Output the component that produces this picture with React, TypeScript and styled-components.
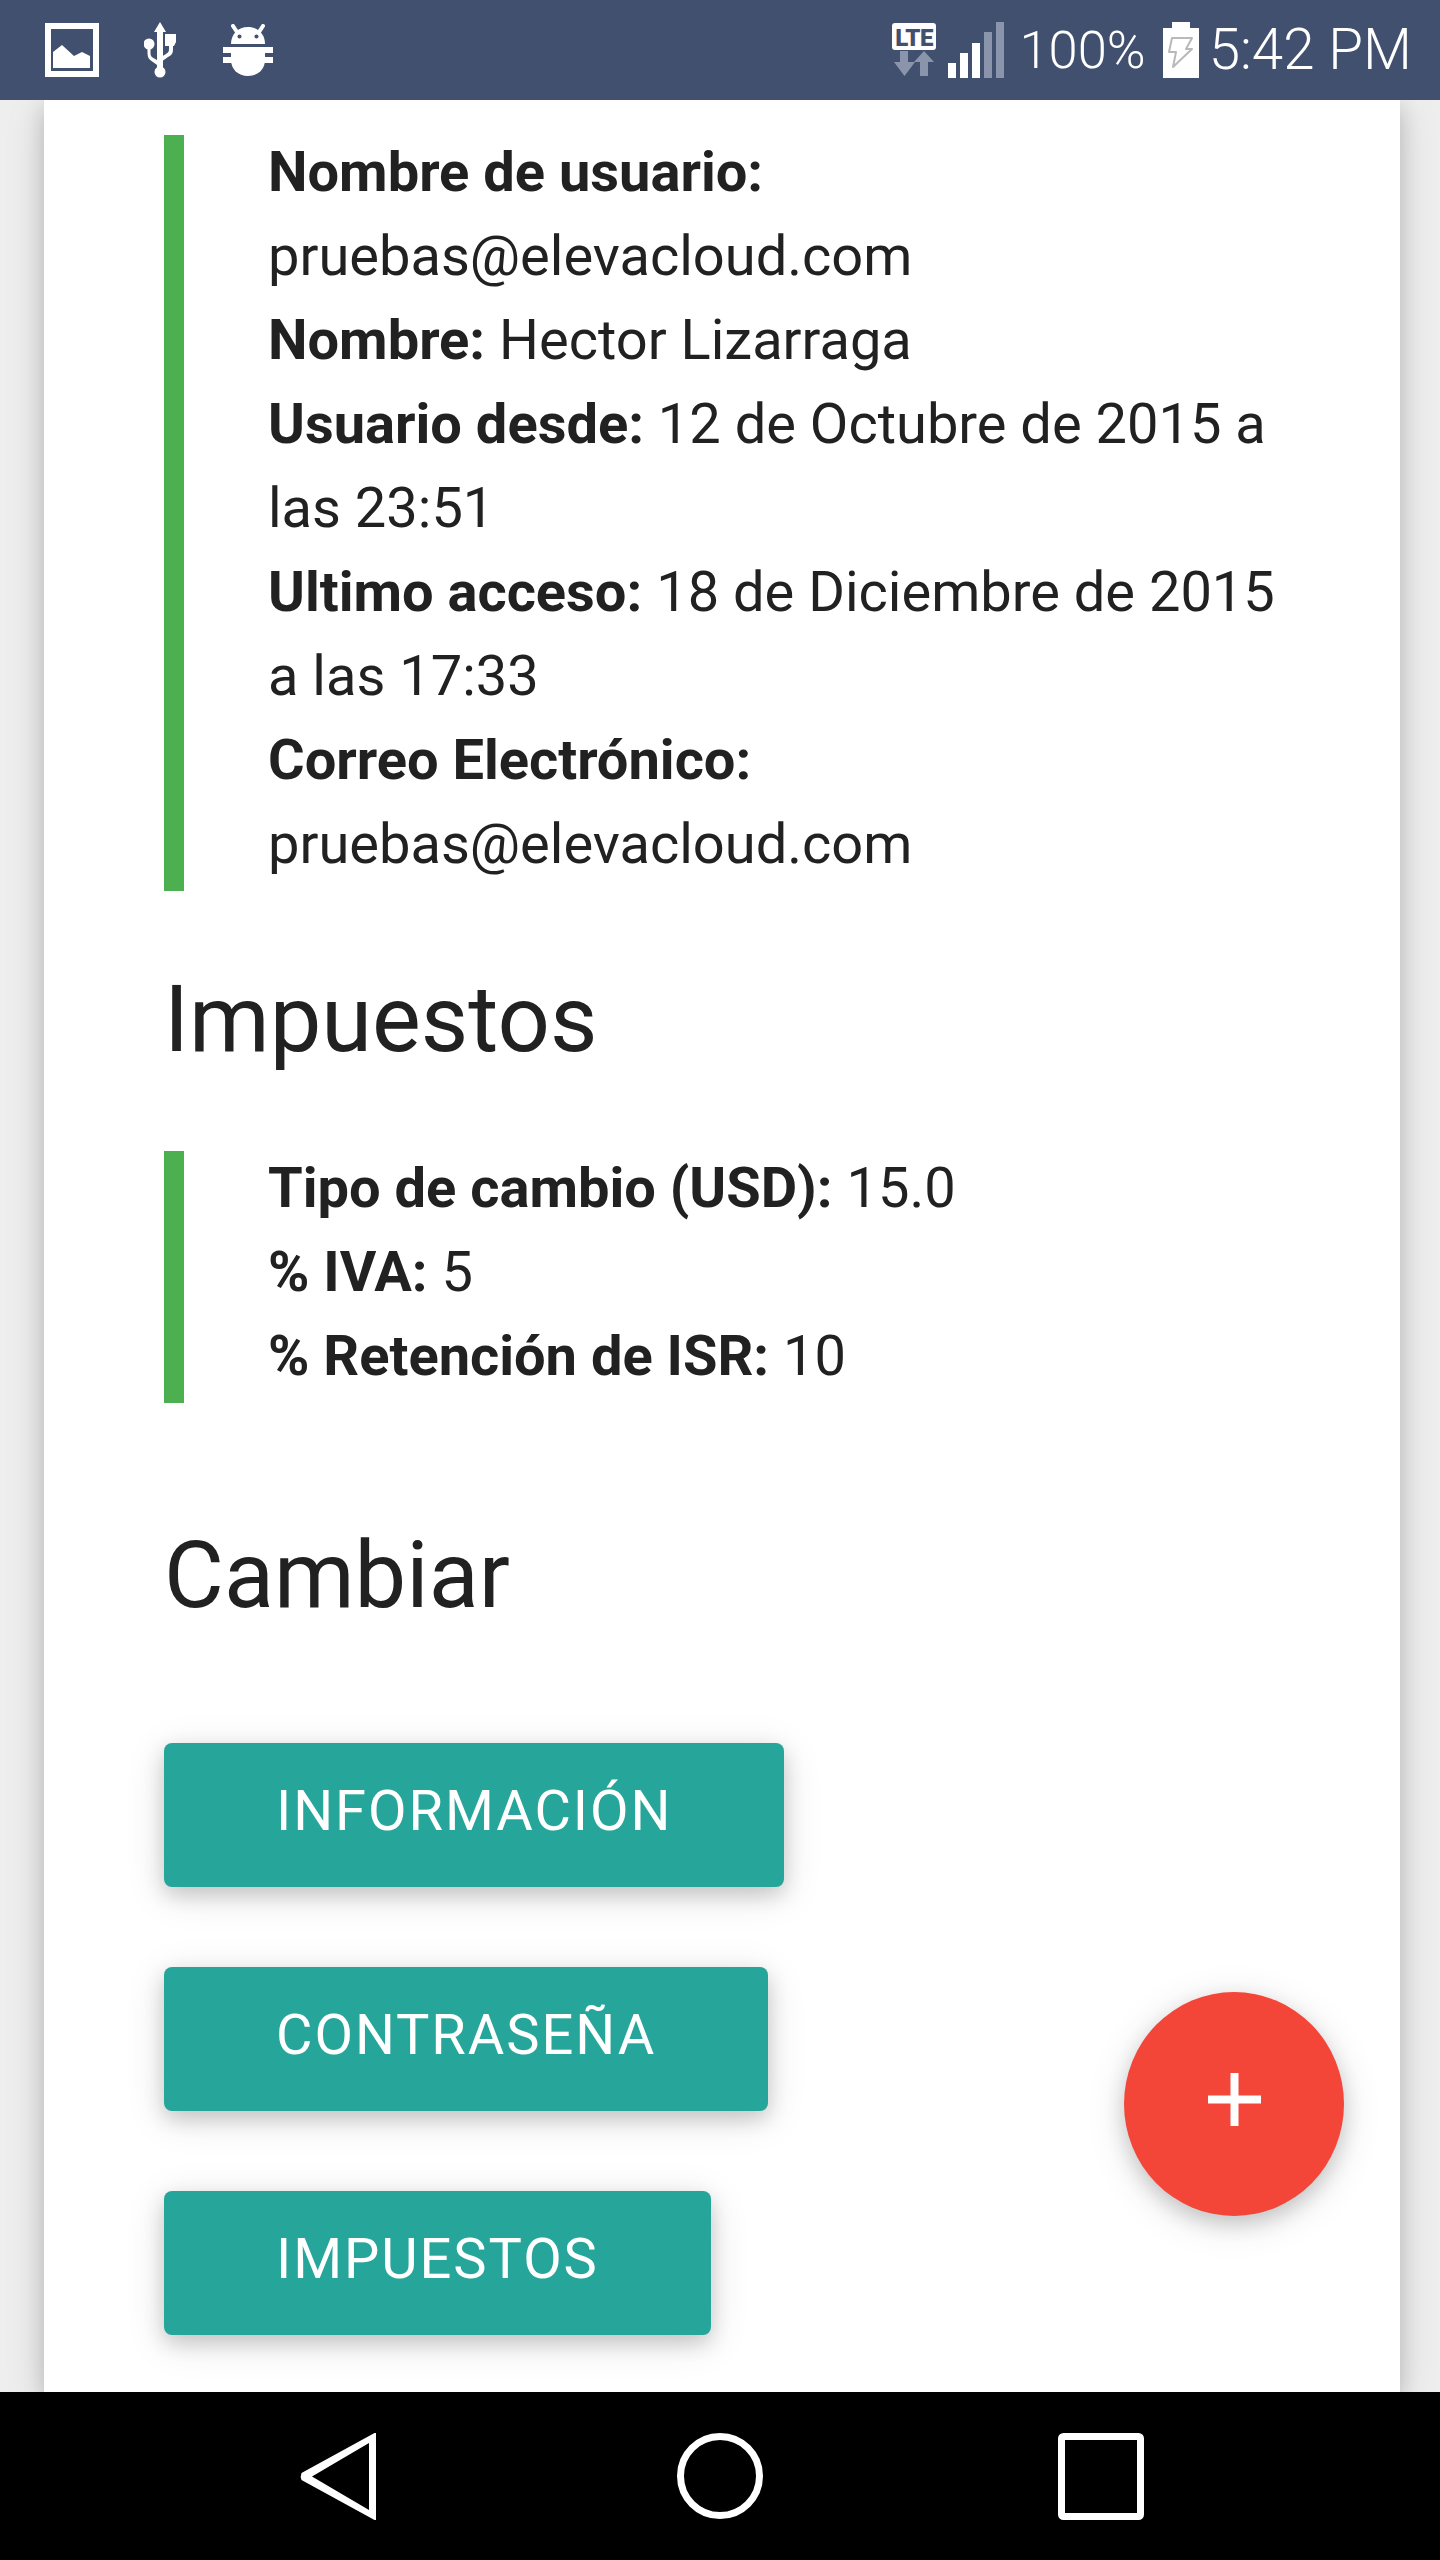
import React from 'react';
import styled, { createGlobalStyle } from 'styled-components';

const Global = createGlobalStyle`
  html, body { margin: 0; padding: 0; background: #eeeeee; }
  * { box-sizing: border-box; }
`;

const depth = '0 8px 20px rgba(0, 0, 0, 0.16), 0 8px 40px rgba(0, 0, 0, 0.12)';

const Screen = styled.div`
  position: relative;
  width: 1440px;
  height: 2560px;
  display: flex;
  flex-direction: column;
  overflow: hidden;
  background: #eeeeee;
  font-family: Roboto, "Liberation Sans", sans-serif;
  color: #212121;
`;

const StatusBar = styled.header`
  height: 100px;
  flex: none;
  background: #42506f;
  display: flex;
  align-items: center;
  justify-content: space-between;
  padding: 0 28px 0 45px;
  color: #fff;
  z-index: 2;
`;

const LeftIcons = styled.div`
  display: flex;
  align-items: center;
`;

const RightIcons = styled.div`
  display: flex;
  align-items: center;
`;

const Icon = styled.svg<{ $after?: number }>`
  display: block;
  flex: none;
  margin-right: ${(p) => p.$after ?? 0}px;
`;

const Percent = styled.span`
  font-size: 52.5px;
  font-weight: 350;
  line-height: 1;
  margin: 0 17px 0 15px;
`;

const Clock = styled.span`
  font-size: 56.5px;
  font-weight: 350;
  line-height: 1;
`;

const Main = styled.main`
  flex: 1;
  min-height: 0;
  overflow: hidden;
  padding: 0 40px 0 44px;
`;

const Card = styled.section`
  background: #fff;
  box-shadow: ${depth};
  padding: 35px 120px 0 120px;
  min-height: 100%;
`;

const Quote = styled.blockquote`
  display: flex;
  flex-direction: column;
  margin: 0;
  border-left: 20px solid #4caf50;
  padding: 0 0 5px 84px;
  font-size: 56px;
  line-height: 84px;
  font-weight: 400;
`;

const Line = styled.div`
  &:first-child {
    margin-top: -5px;
  }
`;

const Label = styled.strong`
  font-weight: 700;
`;

const Heading = styled.h4<{ $top: number; $bottom: number }>`
  margin: ${(p) => p.$top}px 0 ${(p) => p.$bottom}px 0;
  font-size: 92px;
  font-weight: 400;
  line-height: 110px;
  color: #212121;
`;

const ButtonStack = styled.div`
  display: flex;
  flex-direction: column;
  align-items: flex-start;
  gap: 80px;
`;

const RaisedButton = styled.button`
  height: 144px;
  padding: 0 112px 8px;
  border: none;
  border-radius: 8px;
  background: #26a69a;
  color: #fff;
  font-family: inherit;
  font-size: 56px;
  letter-spacing: 1.95px;
  text-transform: uppercase;
  box-shadow: ${depth};
`;

const Fab = styled.button`
  position: absolute;
  left: 1124px;
  top: 1992px;
  width: 220px;
  height: 224px;
  border: none;
  border-radius: 50%;
  background: #f44539;
  padding: 0 0 10px;
  display: flex;
  align-items: center;
  justify-content: center;
  box-shadow: ${depth};
`;

const NavBar = styled.nav`
  height: 168px;
  flex: none;
  background: #000;
  display: grid;
  grid-template-columns: repeat(3, 381.5px);
  justify-content: start;
  justify-items: center;
  align-items: center;
  padding-left: 147.5px;
  z-index: 2;
`;

const App = () => (
  <Screen>
    <Global />
    <StatusBar>
      <LeftIcons>
        <Icon $after={45} width="54" height="54" viewBox="0 0 54 54">
          <rect x="3" y="3" width="48" height="48" fill="none" stroke="#fff" strokeWidth="6" />
          <path d="M8 45V29l9-7 12 11 8-4 8 4v12z" fill="#fff" />
        </Icon>
        <Icon $after={47} width="32" height="56" viewBox="0 0 32 56">
          <path d="M16 0l6 10h-3v36h-6V10h-3z" fill="#fff" />
          <circle cx="16" cy="50" r="5.5" fill="#fff" />
          <circle cx="5" cy="22" r="5.5" fill="#fff" />
          <path d="M21 12h11v8l-2 4h-1v3c0 4-1 6-5 8l-7 5v-5l5-3c3-2 3-3 3-6v-2h-4z" fill="#fff" />
          <path d="M3.5 26v5c0 4 1 6 4 8l7 5v-5l-5-3c-2-1-3-2-3-5v-5z" fill="#fff" />
        </Icon>
        <Icon width="50" height="52" viewBox="0 0 50 52">
          <path d="M10 2l4 6M40 2l-4 6" stroke="#fff" strokeWidth="4" strokeLinecap="round" />
          <path d="M8 20c0-10 7-17 17-17s17 7 17 17z" fill="#fff" />
          <circle cx="16.5" cy="12.5" r="2" fill="#42506f" />
          <circle cx="33.5" cy="12.5" r="2" fill="#42506f" />
          <path d="M0 23h50v6H0zM0 33h50v6H0z" fill="#fff" />
          <path d="M8 23h34v13c0 9-7 16-17 16S8 45 8 36z" fill="#fff" />
        </Icon>
      </LeftIcons>
      <RightIcons>
        <Icon $after={12} width="44" height="54" viewBox="0 0 44 54">
          <rect x="0" y="0" width="44" height="27" rx="3" fill="#fff" />
          <text x="22" y="22.5" textAnchor="middle" fontFamily="Roboto" fontWeight="900" fontSize="24" fill="#42506f" letterSpacing="-0.5">LTE</text>
          <path d="M8 28h8v11h7L12.5 53 2 39h6z" fill="#8a94aa" />
          <path d="M32 28l10 11h-6v14h-8V39h-6z" fill="#8a94aa" />
        </Icon>
        <Icon width="56" height="56" viewBox="0 0 56 56">
          <rect x="0" y="41" width="8" height="15" fill="#fff" />
          <rect x="12" y="31" width="8" height="25" fill="#fff" />
          <rect x="24" y="21" width="8" height="35" fill="#fff" />
          <rect x="36" y="10" width="8" height="46" fill="#8a94aa" />
          <rect x="48" y="0" width="8" height="56" fill="#8a94aa" />
        </Icon>
        <Percent>100%</Percent>
        <Icon $after={10} width="36" height="56" viewBox="0 0 36 56">
          <path d="M9 0h18v6h9v50H0V6h9z" fill="#fff" />
          <path d="M9 16h20l-6 11h6L10 45l3-15H6z" fill="none" stroke="#b9b9b9" strokeWidth="2" strokeLinejoin="round" />
        </Icon>
        <Clock>5:42 PM</Clock>
      </RightIcons>
    </StatusBar>
    <Main>
      <Card>
        <Quote>
          <Line><Label>Nombre de usuario:</Label></Line>
          <Line>pruebas@elevacloud.com</Line>
          <Line><Label>Nombre:</Label> Hector Lizarraga</Line>
          <Line><Label>Usuario desde:</Label> 12 de Octubre de 2015 a</Line>
          <Line>las 23:51</Line>
          <Line><Label>Ultimo acceso:</Label> 18 de Diciembre de 2015</Line>
          <Line>a las 17:33</Line>
          <Line><Label>Correo Electrónico:</Label></Line>
          <Line>pruebas@elevacloud.com</Line>
        </Quote>
        <Heading $top={74} $bottom={76}>Impuestos</Heading>
        <Quote>
          <Line><Label>Tipo de cambio (USD):</Label> 15.0</Line>
          <Line><Label>% IVA:</Label> 5</Line>
          <Line><Label>% Retención de ISR:</Label> 10</Line>
        </Quote>
        <Heading $top={118} $bottom={112}>Cambiar</Heading>
        <ButtonStack>
          <RaisedButton>Información</RaisedButton>
          <RaisedButton>Contraseña</RaisedButton>
          <RaisedButton>Impuestos</RaisedButton>
        </ButtonStack>
      </Card>
    </Main>
    <Fab aria-label="Agregar">
      <Icon width="53" height="53" viewBox="0 0 53 53">
        <path d="M0 22.5h53v8H0zM22.5 0h8v53h-8z" fill="#fff" />
      </Icon>
    </Fab>
    <NavBar>
      <Icon width="76" height="87" viewBox="0 0 76 87">
        <path fillRule="evenodd" d="M76 0V87H74.5L1.5 47Q0 43.5 1.5 40L74.5 0zM69 10V77L12 43.5z" fill="#fff" />
      </Icon>
      <Icon width="86" height="86" viewBox="0 0 86 86">
        <circle cx="43" cy="43" r="39.5" fill="none" stroke="#fff" strokeWidth="7" />
      </Icon>
      <Icon width="86" height="87" viewBox="0 0 86 87">
        <rect x="3.5" y="3.5" width="79" height="80" rx="2" fill="none" stroke="#fff" strokeWidth="7" />
      </Icon>
    </NavBar>
  </Screen>
);

export default App;
